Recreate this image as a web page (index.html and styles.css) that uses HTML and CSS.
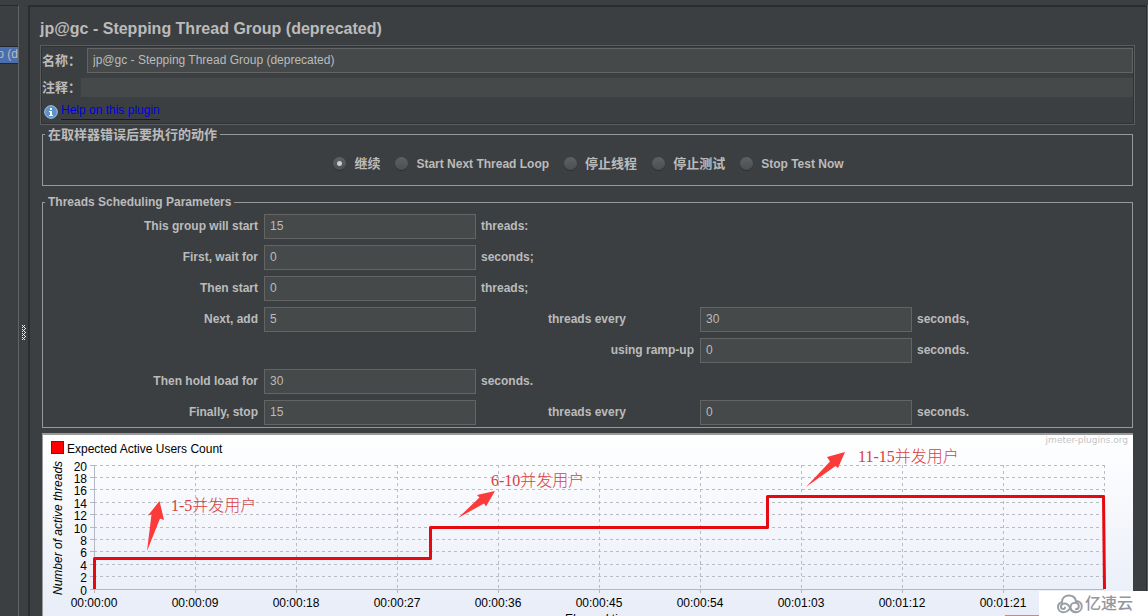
FILE: index.html
```html
<!DOCTYPE html>
<html lang="zh-CN">
<head>
<meta charset="utf-8">
<title>Stepping Thread Group</title>
<link rel="stylesheet" href="styles.css">
</head>
<body>
<div class="window">
  <aside class="tree"><div class="tree-item">p (d</div></aside>
  <div class="splitter">
    <svg width="6" height="16" viewBox="0 0 6 16" shape-rendering="crispEdges" aria-hidden="true">
      <defs><pattern id="dots" width="4" height="4" patternUnits="userSpaceOnUse">
        <path fill="#e8e8e8" d="M3 0h1v1h-1zM1 0h1v1h-1zM2 1h1v1h-1zM1 2h1v1h-1zM3 2h1v1h-1zM0 3h1v1h-1z"/>
      </pattern></defs>
      <rect x="1" width="4" height="15" fill="url(#dots)"/>
    </svg>
  </div>
  <main class="main">
    <h1 class="title">jp@gc - Stepping Thread Group (deprecated)</h1>
    <section class="header">
      <div class="name-row"><label for="name">名称：</label><input class="field" id="name" type="text" value="jp@gc - Stepping Thread Group (deprecated)"></div>
      <div class="comment-row"><label for="comment">注释：</label><input class="field plain" id="comment" type="text"></div>
      <div class="help-row">
        <svg width="14" height="14" viewBox="0 0 14 14" aria-hidden="true">
          <circle cx="7" cy="7" r="6.3" fill="#5e93c8" stroke="#a9c8e6"/>
          <path fill="#fff" d="M6 3h2v2H6zM5 6h3v4h1v1H5v-1h1V7H5z"/>
        </svg>
        <a class="help" href="#">Help on this plugin</a>
      </div>
    </section>

    <fieldset class="group actions">
      <legend class="zh">在取样器错误后要执行的动作</legend>
      <div class="radios">
        <label class="zh"><input type="radio" name="act" checked>继续</label>
        <label><input type="radio" name="act">Start Next Thread Loop</label>
        <label class="zh"><input type="radio" name="act">停止线程</label>
        <label class="zh"><input type="radio" name="act">停止测试</label>
        <label><input type="radio" name="act">Stop Test Now</label>
      </div>
    </fieldset>

    <fieldset class="group params">
      <legend>Threads Scheduling Parameters</legend>
      <div class="grid">
        <label class="lead" for="p1">This group will start</label><input class="field" id="p1" type="text" value="15"><span class="unit wide">threads:</span>
        <label class="lead" for="p2">First, wait for</label><input class="field" id="p2" type="text" value="0"><span class="unit wide">seconds;</span>
        <label class="lead" for="p3">Then start</label><input class="field" id="p3" type="text" value="0"><span class="unit wide">threads;</span>
        <label class="lead" for="p4">Next, add</label><input class="field" id="p4" type="text" value="5"><label class="every" for="p5">threads every</label><input class="field" id="p5" type="text" value="30"><span class="unit">seconds,</span>
        <label class="lead ramp" for="p6">using ramp-up</label><input class="field" id="p6" type="text" value="0"><span class="unit">seconds.</span>
        <label class="lead" for="p7">Then hold load for</label><input class="field" id="p7" type="text" value="30"><span class="unit wide">seconds.</span>
        <label class="lead" for="p8">Finally, stop</label><input class="field" id="p8" type="text" value="15"><label class="every" for="p9">threads every</label><input class="field" id="p9" type="text" value="0"><span class="unit">seconds.</span>
      </div>
    </fieldset>

    <div class="chart">
      <svg class="plot" viewBox="43 435 1090 200" role="img" aria-label="Expected Active Users Count">
        <rect x="51.500" y="441.500" width="12" height="12" fill="#f00" stroke="#b00000"/>
        <text x="67" y="453">Expected Active Users Count</text>
        <text class="mark" x="1128" y="443" text-anchor="end">jmeter-plugins.org</text>
        <text class="axis-name" transform="translate(62 595) rotate(-90)">Number of active threads</text>
        <path class="gridline" d="M94 465.5H1104M94 477.5H1104M94 489.5H1104M94 502.5H1104M94 514.5H1104M94 527.5H1104M94 539.5H1104M94 551.5H1104M94 564.5H1104M94 576.5H1104"/>
        <path class="gridline" d="M195.5 465V589M296.5 465V589M397.5 465V589M498.5 465V589M599.5 465V589M700.5 465V589M801.5 465V589M902.5 465V589M1003.5 465V589M1104.5 465V589"/>
        <path class="axis" d="M94.5 465V593M90 589.5H1104M195.5 589v4M296.5 589v4M397.5 589v4M498.5 589v4M599.5 589v4M700.5 589v4M801.5 589v4M902.5 589v4M1003.5 589v4M90 465.5h5M90 477.5h5M90 489.5h5M90 502.5h5M90 514.5h5M90 527.5h5M90 539.5h5M90 551.5h5M90 564.5h5M90 576.5h5"/>
        <g text-anchor="end">
          <text x="87" y="471">20</text><text x="87" y="483">18</text><text x="87" y="495">16</text><text x="87" y="508">14</text><text x="87" y="520">12</text><text x="87" y="533">10</text><text x="87" y="545">8</text><text x="87" y="557">6</text><text x="87" y="570">4</text><text x="87" y="582">2</text><text x="87" y="595">0</text>
        </g>
        <g text-anchor="middle">
          <text x="94" y="607">00:00:00</text><text x="195" y="607">00:00:09</text><text x="296" y="607">00:00:18</text><text x="397" y="607">00:00:27</text><text x="498" y="607">00:00:36</text><text x="599" y="607">00:00:45</text><text x="700" y="607">00:00:54</text><text x="801" y="607">00:01:03</text><text x="902" y="607">00:01:12</text><text x="1003" y="607">00:01:21</text>
          <text x="599" y="623" font-style="italic">Elapsed time</text>
        </g>
        <path class="series" d="M94.500 589V558.500H430.500V527.500H767.500V496.500H1103.500L1104.500 589"/>
        <g class="arrow">
          <path d="M147 551L151.500 514.500L148 515.500L159.500 501L164 520L160 518.500Z"/>
          <path d="M458 518L479.500 497.500L477 495L495 491L486 506.500L484 503.500Z"/>
          <path d="M806 487L830 461.500L827 457L845 452L838 468L835.500 466Z"/>
        </g>
        <g class="note">
          <text x="171" y="511">1-5并发用户</text><text x="491" y="486">6-10并发用户</text><text x="858" y="462">11-15并发用户</text>
        </g>
        <path fill="#d9855f" d="M1005 615h34v2h-34z"/>
      </svg>
    </div>
  </main>
  <div class="brand">
    <svg width="26" height="20" viewBox="0 0 26 20" fill="none" stroke="#9a9fa5" stroke-width="2" stroke-linecap="round" aria-hidden="true">
      <path d="M5 8C5 4 8 1.500 12 1.500c3.800 0 6.300 2.200 7 5.500 3.300 0 5.800 2.300 5.800 5.500 0 3.300-2.600 5.700-6 5.700-3.300 0-5.300-2.200-5.300-5 0-2.600 2-4.400 4.500-4.400 2.300 0 3.800 1.600 3.800 3.500 0 1.700-1.300 2.900-2.900 2.900"/>
      <path d="M8 13.500c0 1-.8 1.500-1.700 1.500C4.800 15 4 14 4 12.800 4 11 5.500 9.600 7.600 9.600c2.500 0 4.200 1.800 5.400 4.200 1.300 2.600 3 4.400 5.800 4.400M5 8c-2.400.7-4 2.600-4 5 0 3 2.400 5.200 5.500 5.200 2.800 0 4.500-1.300 6-3.200"/>
    </svg>
    <span>亿速云</span>
  </div>
</div>
</body>
</html>
```
FILE: styles.css
```css
* { box-sizing: border-box; }
body {
  margin: 0;
  background: #3c3f41;
  color: #bbb;
  font: bold 12px/16px "Liberation Sans", "Noto Sans CJK SC", sans-serif;
}
.window {
  position: relative;
  display: flex;
  height: 100vh;
  overflow: hidden;
  border-top: 5px solid #3c3f41;
}
.tree {
  flex: 0 0 19px;
  overflow: hidden;
  border-top: 1px solid #282b2d;
  border-right: 1px solid #616466;
  padding-top: 40px;
}
.tree-item {
  display: flex;
  justify-content: flex-end;
  height: 18px;
  background: #4b6eaf;
  border-top: 1px solid #23272e;
  border-bottom: 1px solid #23272e;
  font-weight: normal;
  line-height: 15px;
  white-space: nowrap;
}
.splitter {
  flex: 0 0 9px;
  display: flex;
  align-items: center;
  justify-content: center;
  padding-top: 44px;
}
.main {
  flex: 1;
  min-width: 0;
  margin-right: 1px;
  border: solid #2b2e30;
  border-width: 2px 1px 0 2px;
  box-shadow: 1px 0 #616466;
  padding: 12px 11px 0 10px;
}
.title { margin: 0 0 6px; font-size: 16px; line-height: 20px; white-space: nowrap; }
.header {
  border: 1px solid #5a5d5f;
  outline: 1px solid #303335;
  outline-offset: -2px;
  padding: 2px 1px 4px;
}
.name-row, .comment-row, .help-row { display: flex; align-items: center; }
.name-row { gap: 6px; }
.comment-row { margin-top: 5px; }
.name-row label, .comment-row label, .zh { font-size: 13px; line-height: 17px; }
.help-row { padding: 5px 0 0 2px; gap: 3px; }
.help-row svg { margin-top: 2px; }
.help {
  color: #0000e6;
  font-weight: normal;
  line-height: 17px;
  text-decoration: none;
  border-bottom: 1px solid #0000e6;
}
.field {
  width: 100%;
  min-width: 0;
  height: 25px;
  border: 1px solid #646464;
  background: #45494a;
  color: #bbb;
  font: 12px "Liberation Sans", sans-serif;
  padding: 0 5px 2px;
}
.name-row .field, .comment-row .field { flex: 1; width: auto; }
.comment-row .plain { height: 19px; border: 0; }
.group {
  min-width: 0;
  margin: 0 2px;
  border: 1px solid #969899;
  padding: 0;
}
.group legend { margin-left: 2px; padding: 0 3px; }
.actions { margin-top: 1px; }
.radios {
  display: flex;
  flex-wrap: wrap;
  justify-content: center;
  gap: 15px;
  padding: 12px 0 13px 2px;
}
.radios label { display: flex; align-items: center; gap: 8px; }
.radios input {
  appearance: none;
  width: 13px;
  height: 13px;
  margin: 0;
  border-radius: 50%;
  background: linear-gradient(#5d6163, #4b4f51);
  box-shadow: 0 1px #2c2f31;
}
.radios input:checked {
  background: radial-gradient(circle, #ccc 0 2px, transparent 3px), linear-gradient(#5d6163, #4b4f51);
}
.params { margin-top: 8px; }
.grid {
  display: grid;
  grid-template-columns: 221fr 212fr 72fr 152fr 212fr 220fr;
  row-gap: 6px;
  align-items: center;
  padding: 4px 0 2px;
}
.grid label, .unit { padding-bottom: 2px; }
.lead { text-align: right; padding-right: 6px; }
.unit { padding-left: 5px; }
.wide { grid-column: 3 / -1; }
.every { grid-column: 4; }
.ramp { grid-column: 4; }
.chart {
  margin: 5px 2px 0;
  border: 2px solid #999;
  border-width: 2px 0 0 1px;
  background: linear-gradient(#fff, #e6ebf7);
}
.plot { display: block; width: 100%; font: 12px "Liberation Sans", sans-serif; fill: #000; }
.mark { font: 9px "DejaVu Sans", sans-serif; fill: #c4c4c8; }
.axis-name { font-style: italic; }
.gridline { fill: none; stroke: #b9bcc8; stroke-dasharray: 3 3; }
.axis { fill: none; stroke: #b4b8c4; }
.series { fill: none; stroke: #e60a10; stroke-width: 3; stroke-linejoin: round; }
.arrow { fill: #fb3a3a; }
.note { font: 300 16px "Liberation Serif", "Noto Sans CJK SC", serif; fill: #d8403f; }
.brand {
  position: absolute;
  right: 0;
  bottom: 0;
  width: 109px;
  height: 25px;
  display: flex;
  align-items: center;
  gap: 2px;
  padding-left: 18px;
  background: #fff;
  color: #92979d;
  font-size: 16px;
  font-weight: 500;
}
```
